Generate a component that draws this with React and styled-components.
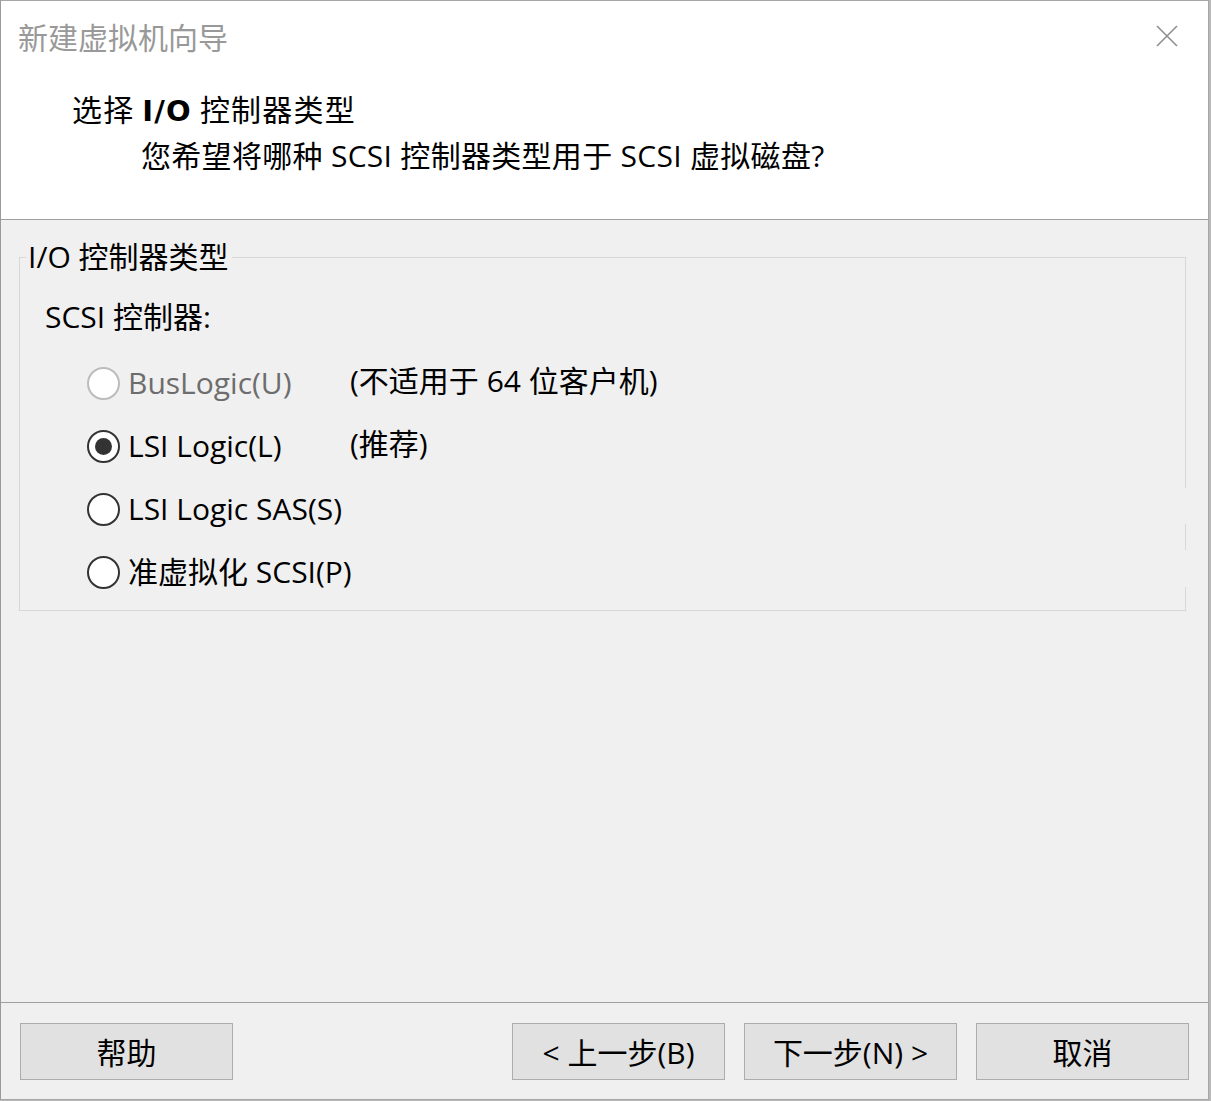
import React from "react";
import styled, { createGlobalStyle } from "styled-components";

const Global = createGlobalStyle`
  html, body { margin: 0; padding: 0; background: #b9b9b9; }
  body { font-family: "Noto Sans CJK SC", "Noto Sans", sans-serif; }
  * { box-sizing: border-box; }
`;

const Window = styled.div`
  width: 1209px;
  height: 1100px;
  border: 1px solid #a6a6a6;
  border-left-color: #9a9a9a;
  background: #f0f0f0;
  display: flex;
  flex-direction: column;
  font-size: 30px;
  color: #000;
`;

const TopArea = styled.div`
  background: #fff;
  border-bottom: 1px solid #a0a0a0;
  height: 219px;
  display: flex;
  flex-direction: column;
`;

const TitleBar = styled.div`
  height: 72px;
  display: flex;
  align-items: center;
  justify-content: space-between;
  padding: 0 30px 2px 17px;
`;

const TitleText = styled.div`
  color: #999;
  font-size: 30px;
  line-height: 36px;
`;

const CloseBtn = styled.button`
  border: 0;
  background: transparent;
  padding: 0;
  width: 22px;
  height: 22px;
  display: flex;
`;

const Header = styled.div`
  padding: 17px 0 0 71px;
  display: flex;
  flex-direction: column;
  gap: 9px;
`;

const HeaderTitle = styled.div`
  font-size: 30px;
  line-height: 36px;
  letter-spacing: 1.2px;
  b { font-family: "DejaVu Sans", sans-serif; font-weight: bold; font-size: 29px; }
`;

const HeaderSub = styled.div`
  padding-left: 69px;
  font-family: "Open Sans", "Noto Sans CJK SC", sans-serif;
  font-size: 30px;
  line-height: 36px;
  letter-spacing: 0.3px;
`;

const Body = styled.div`
  flex: 1;
  padding: 19px 21px 0 18px;
`;

const Group = styled.fieldset`
  margin: 0;
  padding: 24px 0 0 0;
  height: 372px;
  border: 1px solid #d8d8d8;
  border-right-color: transparent;
  background: linear-gradient(
      to bottom,
      #d8d8d8 0 230px,
      transparent 230px 266px,
      #d8d8d8 266px 292px,
      transparent 292px 329px,
      #d8d8d8 329px
    )
    right top / 1px 100% no-repeat;
`;

const Legend = styled.legend`
  margin-left: 6px;
  padding: 0 3px 0 2px;
  font-family: "Open Sans", "Noto Sans CJK SC", sans-serif;
  font-size: 30px;
  line-height: 36px;
`;

const SectionLabel = styled.div`
  padding-left: 25px;
  font-family: "Open Sans", "Noto Sans CJK SC", sans-serif;
  font-size: 30px;
  line-height: 36px;
  margin-bottom: 30px;
`;

const Options = styled.div`
  display: grid;
  grid-template-columns: 33px 214px auto;
  column-gap: 8px;
  row-gap: 27px;
  padding-left: 67px;
  align-items: center;
`;

const Radio = styled.span`
  width: 33px;
  height: 33px;
  border-radius: 50%;
  border: 2px solid ${(p) => (p.$disabled ? "#bcbcbc" : "#333")};
  background: #fff;
  display: flex;
  align-items: center;
  justify-content: center;
  &::after {
    content: "";
    width: 17px;
    height: 17px;
    border-radius: 50%;
    background: ${(p) => (p.$checked ? "#333" : "transparent")};
  }
`;

const OptLabel = styled.span`
  font-family: "Open Sans", "Noto Sans CJK SC", sans-serif;
  font-size: 30px;
  line-height: 36px;
  color: ${(p) => (p.$disabled ? "#6d6d6d" : "#000")};
  white-space: nowrap;
`;

const Note = styled.span`
  font-family: "Open Sans", "Noto Sans CJK SC", sans-serif;
  font-size: 30px;
  line-height: 36px;
  margin-top: ${(p) => p.$up || 0}px;
  white-space: nowrap;
`;

const Footer = styled.div`
  border-top: 1px solid #a0a0a0;
  height: 97px;
  padding: 20px 19px 0 19px;
  display: flex;
  align-items: flex-start;
`;

const Spacer = styled.div`
  flex: 1;
`;

const Buttons = styled.div`
  display: flex;
  gap: 19px;
`;

const Button = styled.button`
  width: 213px;
  height: 57px;
  background: #e1e1e1;
  border: 1px solid #adadad;
  font-family: "Open Sans", "Noto Sans CJK SC", sans-serif;
  font-size: 30px;
  color: #000;
  padding: 0 0 2px;
  display: flex;
  align-items: center;
  justify-content: center;
`;

const options = [
  { label: "BusLogic(U)", note: "(不适用于 64 位客户机)", disabled: true, up: -5 },
  { label: "LSI Logic(L)", note: "(推荐)", checked: true, up: -5 },
  { label: "LSI Logic SAS(S)" },
  { label: "准虚拟化 SCSI(P)" },
];

export default function App() {
  return (
    <>
      <Global />
      <Window>
        <TopArea>
          <TitleBar>
            <TitleText>新建虚拟机向导</TitleText>
            <CloseBtn aria-label="关闭">
              <svg width="22" height="22" viewBox="0 0 22 22">
                <path d="M1 1 L21 21 M21 1 L1 21" stroke="#8f8f8f" strokeWidth="1.6" />
              </svg>
            </CloseBtn>
          </TitleBar>
          <Header>
            <HeaderTitle>
              选择 <b>I/O</b> 控制器类型
            </HeaderTitle>
            <HeaderSub>您希望将哪种 SCSI 控制器类型用于 SCSI 虚拟磁盘?</HeaderSub>
          </Header>
        </TopArea>
        <Body>
          <Group>
            <Legend>I/O 控制器类型</Legend>
            <SectionLabel>SCSI 控制器:</SectionLabel>
            <Options>
              {options.map((o) => (
                <React.Fragment key={o.label}>
                  <Radio $checked={o.checked} $disabled={o.disabled} />
                  <OptLabel $disabled={o.disabled}>{o.label}</OptLabel>
                  <Note $up={o.up}>{o.note || ""}</Note>
                </React.Fragment>
              ))}
            </Options>
          </Group>
        </Body>
        <Footer>
          <Button>帮助</Button>
          <Spacer />
          <Buttons>
            <Button>&lt; 上一步(B)</Button>
            <Button>下一步(N) &gt;</Button>
            <Button>取消</Button>
          </Buttons>
        </Footer>
      </Window>
    </>
  );
}
